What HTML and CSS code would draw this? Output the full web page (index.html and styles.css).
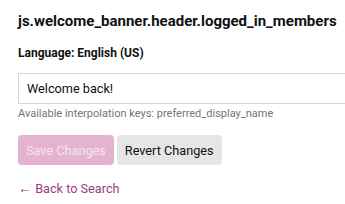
FILE: index.html
```html
<!DOCTYPE html>
<html>
<head>
<meta charset="utf-8">
<link rel="stylesheet" href="styles.css">
</head>
<body>
<div class="page">
  <h1 class="title">js.welcome_banner.header.logged_in_members</h1>
  <div class="lang">Language: English (US)</div>
  <div class="field">
    <input class="input" type="text" value="Welcome back!">
  </div>
  <div class="help">Available interpolation keys: preferred_display_name</div>
  <div class="actions">
    <button class="btn btn-save" disabled>Save Changes</button>
    <button class="btn btn-revert">Revert Changes</button>
  </div>
  <a class="back" href="#"><span class="arrow">←</span> Back to Search</a>
</div>
</body>
</html>
```
FILE: styles.css
```css
html, body {
  margin: 0;
  padding: 0;
  background: #fff;
  overflow: hidden;
}
body {
  font-family: Roboto, "Liberation Sans", sans-serif;
  color: #111;
}
.page {
  padding: 11px 0 0 18px;
  width: 400px;
}
.title {
  margin: 0;
  font-size: 15px;
  font-weight: 700;
  line-height: 20px;
  color: #111;
}
.lang {
  margin-top: 15px;
  font-size: 12px;
  font-weight: 700;
  line-height: 15px;
}
.field {
  margin-top: 12px;
}
.input {
  display: block;
  box-sizing: border-box;
  width: 380px;
  height: 31px;
  border: 1px solid #d6d6d6;
  border-radius: 0;
  padding: 0 8px;
  font-family: Roboto, "Liberation Sans", sans-serif;
  font-size: 12.7px;
  color: #111;
  outline: none;
}
.help {
  margin-top: 3px;
  font-size: 11px;
  line-height: 14px;
  color: #757575;
}
.actions {
  margin-top: 14px;
  display: flex;
  gap: 3px;
}
.btn {
  height: 30px;
  border: none;
  border-radius: 4px;
  padding: 0 8px;
  font-family: Roboto, "Liberation Sans", sans-serif;
  font-size: 12.7px;
}
.btn-save {
  background: #e5b3d0;
  color: #f5e3ee;
}
.btn-revert {
  background: #e6e6e6;
  color: #111;
}
.back {
  display: inline-block;
  margin-top: 15px;
  font-size: 12.7px;
  line-height: 16px;
  color: #9c3d7c;
  text-decoration: none;
}
.arrow {
  font-size: 14px;
}
```
